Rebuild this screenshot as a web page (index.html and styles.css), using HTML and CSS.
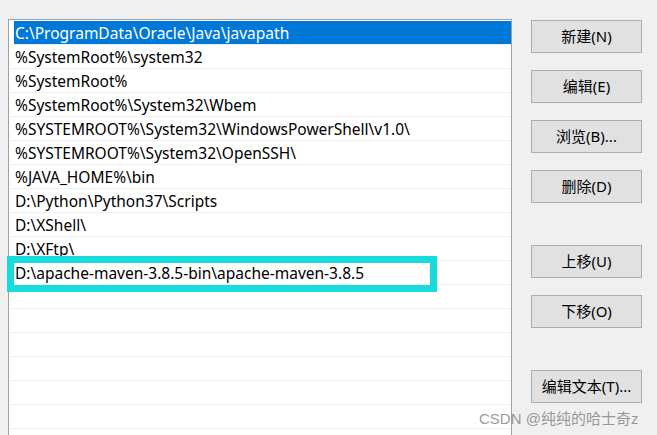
FILE: index.html
```html
<!DOCTYPE html>
<html lang="zh-CN">
<head>
<meta charset="utf-8">
<title>编辑环境变量</title>
<link rel="stylesheet" href="styles.css">
</head>
<body>
<div class="dialog">
  <div class="list">
    <div class="row selected">C:\ProgramData\Oracle\Java\javapath</div>
    <div class="row">%SystemRoot%\system32</div>
    <div class="row">%SystemRoot%</div>
    <div class="row">%SystemRoot%\System32\Wbem</div>
    <div class="row">%SYSTEMROOT%\System32\WindowsPowerShell\v1.0\</div>
    <div class="row">%SYSTEMROOT%\System32\OpenSSH\</div>
    <div class="row">%JAVA_HOME%\bin</div>
    <div class="row">D:\Python\Python37\Scripts</div>
    <div class="row">D:\XShell\</div>
    <div class="row">D:\XFtp\</div>
    <div class="row">D:\apache-maven-3.8.5-bin\apache-maven-3.8.5</div>
    <div class="row"></div>
    <div class="row"></div>
    <div class="row"></div>
    <div class="row"></div>
    <div class="row"></div>
    <div class="row"></div>
    <div class="row"></div>
  </div>
  <div class="buttons">
    <div class="group">
      <button class="btn">新建(N)</button>
      <button class="btn">编辑(E)</button>
      <button class="btn">浏览(B)...</button>
      <button class="btn">删除(D)</button>
    </div>
    <div class="group">
      <button class="btn">上移(U)</button>
      <button class="btn">下移(O)</button>
    </div>
    <div class="group">
      <button class="btn">编辑文本(T)...</button>
    </div>
  </div>
</div>
<div class="highlight"></div>
<div class="watermark">CSDN @纯纯的哈士奇z</div>
</body>
</html>
```

FILE: styles.css
```css
html, body {
  margin: 0;
  padding: 0;
  background: #f0f0f0;
  width: 657px;
  height: 435px;
  overflow: hidden;
  font-family: "Noto Sans", "Noto Sans CJK SC", sans-serif;
}

.dialog {
  display: flex;
  align-items: flex-start;
  padding: 19px 0 0 8px;
}

.list {
  width: 502px;
  height: 430px;
  border: 1px solid #a0a0a0;
  background: #ffffff;
  overflow: hidden;
  flex: none;
}

.row {
  box-sizing: border-box;
  height: 24px;
  margin-left: 1px;
  border-top: 1px solid #f0f0f0;
  padding-left: 5px;
  font-size: 15.5px;
  line-height: 24px;
  color: #000;
  white-space: nowrap;
}

.row.selected {
  margin-left: 5px;
  padding-left: 1px;
  border-top-color: #ffffff;
  background: #0078d7;
  color: #ffffff;
}

.buttons {
  margin-left: 19px;
  margin-top: 1px;
  display: flex;
  flex-direction: column;
  gap: 42px;
}

.group {
  display: flex;
  flex-direction: column;
  gap: 17px;
}

.btn {
  box-sizing: border-box;
  width: 111px;
  height: 33px;
  background: #e1e1e1;
  border: 1px solid #adadad;
  border-radius: 0;
  padding: 0 0 2px 0;
  font-family: "Noto Sans", "Noto Sans CJK SC", sans-serif;
  font-size: 15px;
  color: #000;
}

.highlight {
  position: absolute;
  left: 7px;
  top: 256px;
  width: 416px;
  height: 22px;
  border: 7px solid #18dcdc;
}

.watermark {
  position: absolute;
  left: 479px;
  top: 407px;
  font-family: "Liberation Sans", "Noto Sans CJK SC", sans-serif;
  font-size: 15px;
  color: rgba(120, 120, 120, 0.75);
  white-space: nowrap;
}
```
